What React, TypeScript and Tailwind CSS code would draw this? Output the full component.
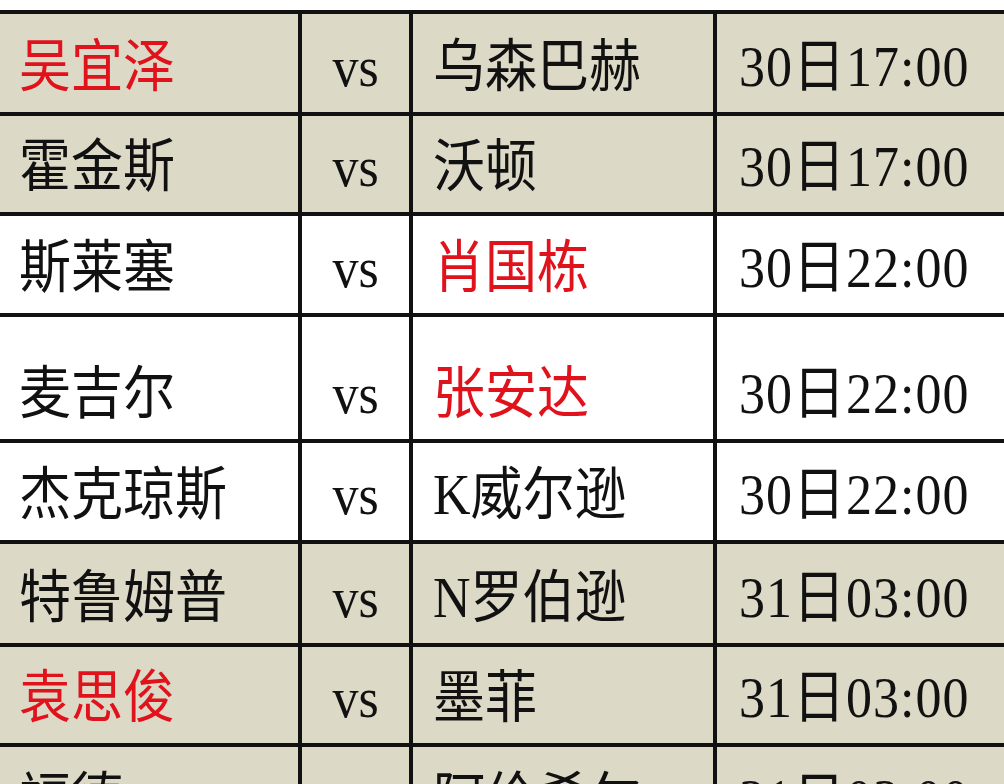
const rows = [
  { home: '吴宜泽', away: '乌森巴赫', time: '30日17:00', hot: 'home', bg: 'bg-[#dcd9c6]', h: 'h-[102px]' },
  { home: '霍金斯', away: '沃顿', time: '30日17:00', hot: '', bg: 'bg-[#dcd9c6]', h: 'h-[100px]' },
  { home: '斯莱塞', away: '肖国栋', time: '30日22:00', hot: 'away', bg: 'bg-white', h: 'h-[101px]' },
  { home: '麦吉尔', away: '张安达', time: '30日22:00', hot: 'away', bg: 'bg-white', h: 'h-[126px]' },
  { home: '杰克琼斯', away: 'K威尔逊', time: '30日22:00', hot: '', bg: 'bg-white', h: 'h-[101px]' },
  { home: '特鲁姆普', away: 'N罗伯逊', time: '31日03:00', hot: '', bg: 'bg-[#dcd9c6]', h: 'h-[103px]' },
  { home: '袁思俊', away: '墨菲', time: '31日03:00', hot: 'home', bg: 'bg-[#dcd9c6]', h: 'h-[100px]' },
  { home: '福德', away: '阿伦希尔', time: '31日03:00', hot: '', bg: 'bg-[#dcd9c6]', h: 'h-[102px]' },
];

const red = 'text-[#e0121c]';
const ink = 'text-[#111111]';

// the source image is a little stretched vertically
function Txt({ children }: { children: React.ReactNode }) {
  return <span className="inline-block scale-y-[1.1] origin-center">{children}</span>;
}

export default function App() {
  return (
    <div className="w-[1004px] h-[784px] overflow-hidden bg-white pt-[10px] font-['Liberation_Serif','Noto_Sans_CJK_SC',serif] text-[52px] leading-none">
      <div className="border-t-4 border-[#111111]">
        {rows.map((r) => (
          <div key={r.home} className={`flex border-b-4 border-[#111111] ${r.bg} ${r.h}`}>
            <div className={`w-[302px] shrink-0 border-r-4 border-[#111111] flex items-end pl-[19px] pb-[19px] ${r.hot === 'home' ? red : ink}`}>
              <Txt>{r.home}</Txt>
            </div>
            <div className={`w-[111px] shrink-0 border-r-4 border-[#111111] flex items-end justify-center pb-[19px] ${ink}`}>
              <Txt>vs</Txt>
            </div>
            <div className={`w-[304px] shrink-0 border-r-4 border-[#111111] flex items-end pl-[20px] pb-[19px] ${r.hot === 'away' ? red : ink}`}>
              <Txt>{r.away}</Txt>
            </div>
            <div className={`flex-1 flex items-end pl-[22px] pb-[19px] tracking-[1px] ${ink}`}>
              <Txt>{r.time}</Txt>
            </div>
          </div>
        ))}
      </div>
    </div>
  );
}
